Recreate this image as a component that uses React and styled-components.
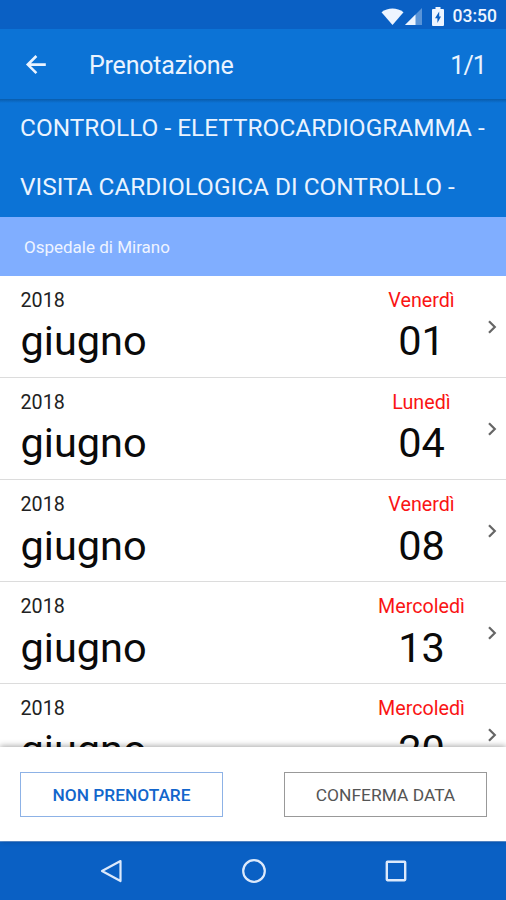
import React from 'react';
import styled, { createGlobalStyle } from 'styled-components'

const GlobalStyle = createGlobalStyle`
  * { box-sizing: border-box; }
  body { margin: 0; background: #fff; font-family: Roboto, "Liberation Sans", sans-serif; }
  button { font-family: inherit; padding: 0; cursor: pointer; }
`

const Screen = styled.div`
  width: 506px;
  height: 900px;
  display: flex;
  flex-direction: column;
  overflow: hidden;
  background: #fff;
`

const StatusBar = styled.div`
  height: 29px;
  flex: none;
  display: flex;
  justify-content: flex-end;
  align-items: center;
  padding: 3px 9px 0 0;
  background: #0a60c4;
  color: #eef5ff;
`

const StatusIcon = styled.svg`
  flex: none;
  margin-right: ${({ $gap }) => $gap}px;
`

const Clock = styled.span`
  font-size: 17.5px;
  font-weight: 500;
  line-height: 24px;
`

const AppBar = styled.header`
  height: 70px;
  flex: none;
  display: flex;
  align-items: center;
  padding: 3px 20px 0 24px;
  background: #0c73d6;
  color: #eaf3ff;
`

const BackButton = styled.button`
  display: flex;
  width: 65px;
  height: 24px;
  border: 0;
  background: none;
  color: #eaf3ff;
`

const Title = styled.h1`
  flex: 1;
  margin: 0;
  font-size: 25px;
  font-weight: 400;
  line-height: 32px;
  letter-spacing: -0.2px;
`

const Counter = styled.span`
  font-size: 25px;
  line-height: 32px;
  letter-spacing: -0.9px;
`

const Services = styled.section`
  height: 118px;
  flex: none;
  padding: 0 20px;
  background: linear-gradient(#0a5cab, #0c73d6 4px);
  color: #eaf3ff;
`

const Service = styled.div`
  height: 59px;
  line-height: 58px;
  font-size: 24.4px;
  white-space: nowrap;
`

const Place = styled.div`
  height: 59px;
  flex: none;
  padding-left: 24px;
  line-height: 60px;
  font-size: 17px;
  background: #80aeff;
  color: #eef4ff;
`

const List = styled.main`
  flex: 1;
  min-height: 0;
  overflow: hidden;
`

const Row = styled.div`
  height: 102.1px;
  display: flex;
  border-bottom: 1.5px solid #dcdcdc;
  padding-left: 20.5px;
  color: #0a0a0a;
`

const Month = styled.div`
  flex: 1;
`

const Day = styled.div`
  width: 120px;
  text-align: center;
`

const Small = styled.div`
  padding-top: 13px;
  font-size: 19.7px;
  line-height: 24px;
  color: ${({ $red }) => ($red ? '#fa1414' : '#222')};
`

const Big = styled.div`
  font-size: 41.5px;
  line-height: 50px;
  margin-top: 3.4px;
`

const Chevron = styled.svg`
  flex: none;
  margin: 44px 6px 0 4.5px;
`

const Footer = styled.footer`
  position: relative;
  height: 94px;
  flex: none;
  display: flex;
  justify-content: space-between;
  padding: 25px 19px 0 20px;
  background: #fff;
  box-shadow: 0 -1px 6px rgba(0, 0, 0, 0.35);
`

const Action = styled.button`
  width: 203px;
  height: 45px;
  border: 1px solid ${({ $primary }) => ($primary ? '#8db2e6' : '#999')};
  background: #fff;
  color: ${({ $primary }) => ($primary ? '#1266cc' : '#555')};
  font-size: ${({ $primary }) => ($primary ? 17.3 : 17.4)}px;
  font-weight: ${({ $primary }) => ($primary ? 500 : 400)};
`

const NavBar = styled.nav`
  height: 59px;
  flex: none;
  display: flex;
  align-items: center;
  justify-content: space-between;
  padding: 0 98px 0 99px;
  border-top: 1px solid #5b93d8;
  background: #0a60c4;
`

const dates = [
  { weekday: 'Venerdì', day: '01' },
  { weekday: 'Lunedì', day: '04' },
  { weekday: 'Venerdì', day: '08' },
  { weekday: 'Mercoledì', day: '13' },
  { weekday: 'Mercoledì', day: '20' },
]

const DateRow = ({ weekday, day }) => (
  <Row>
    <Month>
      <Small>2018</Small>
      <Big>giugno</Big>
    </Month>
    <Day>
      <Small $red>{weekday}</Small>
      <Big>{day}</Big>
    </Day>
    <Chevron width="14" height="14" viewBox="0 0 14 14">
      <path d="M3 1.2L8.8 7L3 12.8" fill="none" stroke="#666" strokeWidth="2.2" />
    </Chevron>
  </Row>
)

const App = () => {
  return (
    <>
      <GlobalStyle />
      <Screen>
        <StatusBar>
          <StatusIcon $gap={1} width="23" height="17" viewBox="0 0 23 17">
            <path d="M0.5 4.2C7 -0.8 16 -0.8 22.5 4.2L11.5 17Z" fill="currentColor" />
          </StatusIcon>
          <StatusIcon $gap={10} width="17" height="17" viewBox="0 0 17 17">
            <path d="M0 17L17 0V17Z" fill="currentColor" opacity="0.35" />
            <path d="M0 17L10.5 6.5V17Z" fill="currentColor" />
          </StatusIcon>
          <StatusIcon $gap={9} width="12" height="19" viewBox="0 0 12 19">
            <path d="M3.5 0H8.5V2H11Q12 2 12 3V18Q12 19 11 19H1Q0 19 0 18V3Q0 2 1 2H3.5Z" fill="currentColor" />
            <path d="M7.2 4.5L3 11.3H5.4V16L9 9.4H7.2Z" fill="#0a60c4" />
          </StatusIcon>
          <Clock>03:50</Clock>
        </StatusBar>

        <AppBar>
          <BackButton aria-label="Indietro">
            <svg width="24" height="24" viewBox="0 0 24 24">
              <path d="M21.8 10.6H3.8M12.4 2L3.8 10.6L12.4 19.2" fill="none" stroke="currentColor" strokeWidth="2.6" />
            </svg>
          </BackButton>
          <Title>Prenotazione</Title>
          <Counter>1/1</Counter>
        </AppBar>

        <Services>
          <Service>CONTROLLO - ELETTROCARDIOGRAMMA -</Service>
          <Service>VISITA CARDIOLOGICA DI CONTROLLO -</Service>
        </Services>
        <Place>Ospedale di Mirano</Place>

        <List>
          {dates.map((date) => (
            <DateRow key={date.day} {...date} />
          ))}
        </List>

        <Footer>
          <Action $primary>NON PRENOTARE</Action>
          <Action>CONFERMA DATA</Action>
        </Footer>

        <NavBar>
          <svg width="24" height="26" viewBox="0 0 24 26">
            <path d="M21.5 3L3 13L21.5 23Z" fill="none" stroke="#dce9fb" strokeWidth="2.2" strokeLinejoin="round" />
          </svg>
          <svg width="26" height="26" viewBox="0 0 26 26">
            <circle cx="13" cy="13" r="10.8" fill="none" stroke="#dce9fb" strokeWidth="2.2" />
          </svg>
          <svg width="24" height="24" viewBox="0 0 24 24">
            <rect x="2.8" y="2.8" width="18.4" height="18.4" rx="0.6" fill="none" stroke="#dce9fb" strokeWidth="2.4" />
          </svg>
        </NavBar>
      </Screen>
    </>
  )
};
export default App
